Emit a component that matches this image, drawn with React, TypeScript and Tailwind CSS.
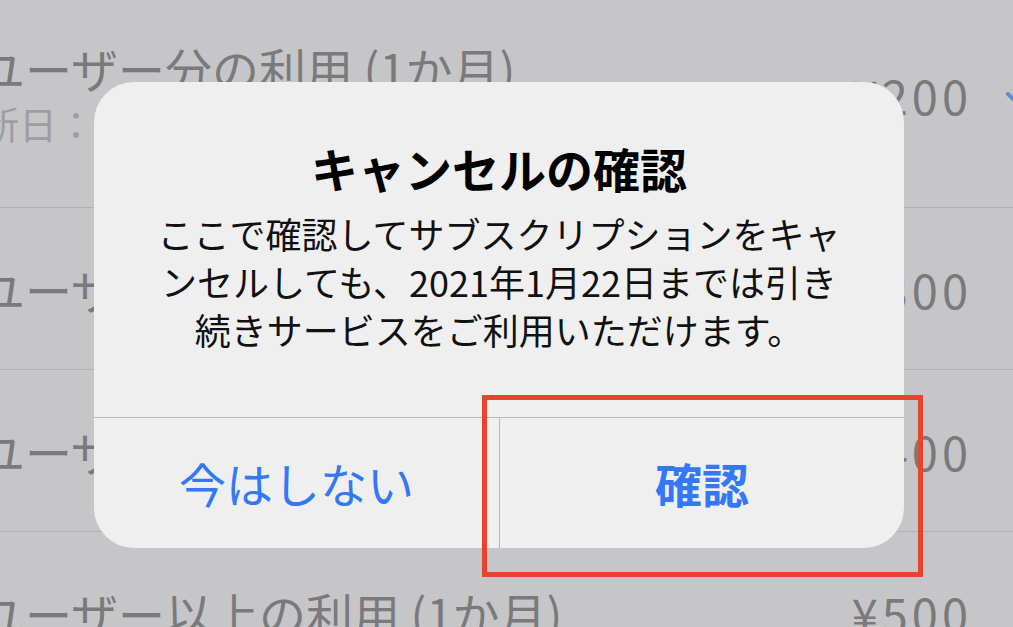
import React from "react";

function Check() {
  return (
    <svg width="30" height="30" viewBox="0 0 30 30" className="shrink-0 ml-[32px] mr-[-62px]">
      <path d="M4 16 L12 24 L27 6" fill="none" stroke="#5b8ed6" strokeWidth="4" strokeLinecap="round" strokeLinejoin="round" />
    </svg>
  );
}

export default function App() {
  return (
    <div className="relative w-[1013px] h-[627px] overflow-hidden bg-[#c6c6c8] font-['Noto_Sans_CJK_JP',sans-serif]">
      {/* background list */}
      <div className="flex flex-col">
        <div className="h-[208px] pt-[33px] pr-[41px] border-b border-[#b2b2b4] flex items-start">
          <div className="w-full h-[120px] flex items-center">
            <div className="flex flex-col ml-[-22px] whitespace-nowrap">
              <div className="text-[47px] leading-[60px] text-[#7a7a7c]">ユーザー分の利用 (1か月)</div>
              <div className="text-[38px] leading-[50px] text-[#9e9ea0] ml-[-35px]">更新日：2021年1月22日</div>
            </div>
            <div className="ml-auto mt-[4px] text-[47px] leading-[60px] tracking-[4px] text-[#7a7a7c] whitespace-nowrap">¥200</div>
            <Check />
          </div>
        </div>
        <div className="h-[162px] pr-[41px] border-b border-[#b2b2b4] flex items-center">
          <div className="ml-[-22px] text-[47px] leading-[60px] text-[#7a7a7c] whitespace-nowrap">ユーザー分の利用 (1か月)</div>
          <div className="ml-auto text-[47px] leading-[60px] tracking-[4px] text-[#7a7a7c] whitespace-nowrap">¥300</div>
        </div>
        <div className="h-[162px] pr-[41px] border-b border-[#b2b2b4] flex items-center">
          <div className="ml-[-22px] text-[47px] leading-[60px] text-[#7a7a7c] whitespace-nowrap">ユーザー分の利用 (1か月)</div>
          <div className="ml-auto text-[47px] leading-[60px] tracking-[4px] text-[#7a7a7c] whitespace-nowrap">¥400</div>
        </div>
        <div className="h-[162px] pr-[41px] flex items-center">
          <div className="ml-[-22px] text-[47px] leading-[60px] text-[#7a7a7c] whitespace-nowrap">ユーザー以上の利用 (1か月)</div>
          <div className="ml-auto text-[47px] leading-[60px] tracking-[4px] text-[#7a7a7c] whitespace-nowrap">¥500</div>
        </div>
      </div>

      {/* alert dialog */}
      <div className="absolute left-[94px] top-[82px] w-[810px] h-[466px] rounded-[40px] bg-[#efefef] flex flex-col overflow-hidden">
        <div className="h-[335px] shrink-0 flex flex-col items-center pt-[58px]">
          <div className="text-[47px] font-bold leading-[56px] text-black whitespace-nowrap">キャンセルの確認</div>
          <div className="mt-[13px] text-[36px] leading-[48px] text-center text-[#111] whitespace-nowrap">
            ここで確認してサブスクリプションをキャ
            <br />
            ンセルしても、2021年1月22日までは引き
            <br />
            続きサービスをご利用いただけます。
          </div>
        </div>
        <div className="flex-1 flex border-t border-[#b8b8b8]">
          <div className="w-[405px] shrink-0 flex items-center justify-center text-[47px] text-[#3478f6]">今はしない</div>
          <div className="w-px bg-[#b8b8b8]" />
          <div className="flex-1 flex items-center justify-center text-[47px] font-bold text-[#3478f6]">確認</div>
        </div>
      </div>

      {/* annotation */}
      <div className="absolute left-[482px] top-[395px] w-[441px] h-[182px] border-[5px] border-[#e8432c]" />
    </div>
  );
}
